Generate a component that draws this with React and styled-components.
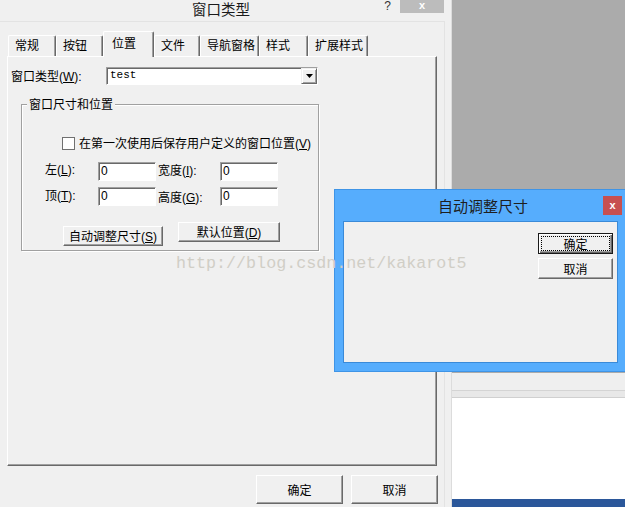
import React from 'react';
import styled, { createGlobalStyle } from 'styled-components';

const Global = createGlobalStyle`
  html, body { margin: 0; padding: 0; background: #f0f0f0; }
  body {
    font-family: "Noto Sans CJK SC", "Liberation Sans", sans-serif;
    font-size: 12px;
    color: #000;
  }
`;

const Screen = styled.div`
  position: relative;
  width: 625px;
  height: 507px;
  overflow: hidden;
  display: flex;
`;

/* ---------- main window ---------- */
const MainWindow = styled.div`
  flex: none;
  width: 452px;
  height: 507px;
  box-sizing: border-box;
  background: #f0f0f0;
  border-right: 1px solid #dcdcdc;
  display: flex;
  flex-direction: column;
`;

const TitleBar = styled.div`
  flex: none;
  height: 21px;
  display: flex;
  align-items: flex-start;
`;

const TitleText = styled.div`
  margin-left: 192px;
  margin-top: 1px;
  font-size: 14.5px;
  line-height: 16px;
  color: #1a1a1a;
  white-space: nowrap;
`;

const HelpMark = styled.div`
  margin-left: auto;
  margin-right: 9px;
  font-family: "Liberation Sans", sans-serif;
  font-size: 12px;
  line-height: 13px;
  color: #333;
`;

const GrayClose = styled.div`
  width: 44px;
  height: 13px;
  margin-right: 7px;
  background: #bcbcbc;
  color: #fff;
  display: flex;
  justify-content: center;
  font-family: "Liberation Sans", sans-serif;
  font-weight: bold;
  font-size: 11px;
  line-height: 11px;
`;

const Frame = styled.div`
  flex: 1;
  width: 445px;
  box-sizing: border-box;
  border-top: 1px solid #e3e3e3;
  border-right: 1px solid #e3e3e3;
  padding-left: 7px;
  display: flex;
  flex-direction: column;
`;

const TabStrip = styled.div`
  height: 35px;
  display: flex;
  align-items: flex-end;
  padding-left: 1px;
  margin-bottom: -1px;
  position: relative;
  z-index: 1;
`;

const Tab = styled.div`
  box-sizing: border-box;
  flex: none;
  width: ${p => p.$w}px;
  height: ${p => (p.$active ? 26 : 21)}px;
  margin-bottom: ${p => (p.$active ? 0 : 1)}px;
  padding: ${p => (p.$active ? '4px 0 0 8px' : '2px 0 0 6px')};
  line-height: 14px;
  white-space: nowrap;
  background: #f0f0f0;
  border-top: 1px solid #fff;
  border-left: 1px solid #fff;
  border-right: 1px solid #696969;
  box-shadow: inset -1px 0 0 #a0a0a0;
  border-radius: 2px 2px 0 0;
`;

const Panel = styled.div`
  width: 430px;
  height: 410px;
  box-sizing: border-box;
  border-top: 1px solid #fff;
  border-left: 1px solid #fff;
  border-right: 1px solid #696969;
  border-bottom: 1px solid #696969;
  box-shadow: inset -1px -1px 0 #a0a0a0;
  padding: 10px 0 0 3px;
  display: flex;
  flex-direction: column;
`;

const TypeRow = styled.div`
  display: flex;
  align-items: center;
  height: 18px;
`;

const Label = styled.span`
  flex: none;
  width: ${p => (p.$w ? `${p.$w}px` : 'auto')};
  line-height: 14px;
  white-space: nowrap;
  padding-left: ${p => p.$pl || 0}px;
  margin-top: ${p => p.$dy || 0}px;
  box-sizing: border-box;
`;

const Mnemonic = styled.span`
  font-family: "Liberation Sans", sans-serif;
  font-size: 12px;
  & u {
    text-decoration: underline;
    text-underline-offset: 1px;
  }
`;

const Key = ({ k, colon }) => (
  <Mnemonic>
    (<u>{k}</u>){colon ? ':' : ''}
  </Mnemonic>
);

const Combo = styled.div`
  width: 212px;
  height: 18px;
  box-sizing: border-box;
  display: flex;
  background: #fff;
  border-top: 1px solid #a0a0a0;
  border-left: 1px solid #a0a0a0;
  border-right: 1px solid #fff;
  border-bottom: 1px solid #fff;
  box-shadow: inset 1px 1px 0 #696969;
`;

const ComboValue = styled.span`
  flex: 1;
  padding-left: 3px;
  font-family: "Liberation Mono", monospace;
  font-size: 11px;
  line-height: 15px;
`;

const ComboArrow = styled.div`
  width: 16px;
  box-sizing: border-box;
  background: #f0f0f0;
  border-top: 1px solid #f0f0f0;
  border-left: 1px solid #f0f0f0;
  border-right: 1px solid #696969;
  border-bottom: 1px solid #696969;
  box-shadow: inset 1px 1px 0 #fff, inset -1px -1px 0 #a0a0a0;
  display: flex;
  align-items: center;
  justify-content: center;
`;

const GroupBox = styled.div`
  margin: 19px 0 0 10px;
  width: 298px;
  height: 147px;
  box-sizing: border-box;
  border: 1px solid #a0a0a0;
  box-shadow: 1px 1px 0 #fff, inset 1px 1px 0 #fff;
  display: flex;
  flex-direction: column;
  align-items: flex-start;
`;

const GroupTitle = styled.span`
  margin: -8px 0 0 5px;
  padding: 0 2px;
  background: #f0f0f0;
  line-height: 14px;
  white-space: nowrap;
`;

const CheckRow = styled.label`
  margin: 25px 0 0 40px;
  display: flex;
  align-items: center;
  gap: 4px;
  line-height: 14px;
  white-space: nowrap;
`;

const CheckBox = styled.span`
  width: 13px;
  height: 13px;
  box-sizing: border-box;
  background: #fff;
  border: 1px solid #707070;
  flex: none;
`;

const FieldGrid = styled.div`
  margin: 11px 0 0 23px;
  display: grid;
  grid-template-columns: 53px 58px 64px 58px;
  grid-auto-rows: 19px;
  row-gap: 6px;
  align-items: center;
`;

const TextBox = styled.div`
  height: 19px;
  box-sizing: border-box;
  background: #fff;
  border-top: 1px solid #a0a0a0;
  border-left: 1px solid #a0a0a0;
  border-right: 1px solid #fff;
  border-bottom: 1px solid #fff;
  box-shadow: inset 1px 1px 0 #696969;
  padding-left: 2px;
  font-family: "Liberation Sans", sans-serif;
  font-size: 12px;
  line-height: 17px;
`;

const GroupButtons = styled.div`
  margin: 16px 0 0 41px;
  display: flex;
  align-items: flex-start;
  gap: 15px;
`;

const Button = styled.button`
  box-sizing: border-box;
  width: ${p => p.$w}px;
  height: ${p => p.$h}px;
  margin-top: ${p => p.$mt || 0}px;
  padding: 0;
  background: #f0f0f0;
  border-top: 1px solid #fff;
  border-left: 1px solid #fff;
  border-right: 1px solid #696969;
  border-bottom: 1px solid #696969;
  border-radius: 0;
  box-shadow: inset -1px -1px 0 #a0a0a0;
  font-family: "Noto Sans CJK SC", "Liberation Sans", sans-serif;
  font-size: 12px;
  line-height: 14px;
  color: #000;
  white-space: nowrap;
`;

const DefaultButton = styled(Button)`
  border: 1px solid #1a1a1a;
  box-shadow: inset 1px 1px 0 #fff, inset -1px -1px 0 #696969, inset -2px -2px 0 #a0a0a0;
  outline: 1px dotted #000;
  outline-offset: -4px;
`;

const FooterRow = styled.div`
  width: 431px;
  margin-top: 9px;
  display: flex;
  justify-content: flex-end;
  gap: 8px;
`;

/* ---------- right backdrop ---------- */
const Backdrop = styled.div`
  flex: 1;
  display: flex;
  flex-direction: column;
`;

const GrayArea = styled.div`
  height: 373px;
  background: #ababab;
`;

const StripA = styled.div`
  height: 18px;
  box-sizing: border-box;
  background: #efefef;
  border-bottom: 1px solid #d4d4d4;
`;

const StripB = styled.div`
  height: 7px;
  box-sizing: border-box;
  background: #e8e8e8;
  border-bottom: 1px solid #d0d0d0;
`;

const WhiteArea = styled.div`
  flex: 1;
  background: #fff;
`;

const BlueBar = styled.div`
  height: 8px;
  background: #2b579a;
`;

/* ---------- overlay dialog ---------- */
const Dialog = styled.div`
  position: absolute;
  left: 334px;
  top: 189px;
  width: 293px;
  height: 183px;
  box-sizing: border-box;
  background: #56adfd;
  border: 1px solid #3f94e6;
  display: flex;
  flex-direction: column;
  z-index: 3;
`;

const DialogTitleBar = styled.div`
  height: 31px;
  flex: none;
  display: grid;
  grid-template-columns: 1fr auto 1fr;
  align-items: center;
  padding: 0 4px 0 9px;
`;

const DialogTitle = styled.div`
  font-size: 15px;
  line-height: 18px;
  color: #1e1e1e;
  white-space: nowrap;
`;

const RedClose = styled.div`
  justify-self: end;
  width: 19px;
  height: 19px;
  background: #c75050;
  color: #fff;
  font-family: "Liberation Sans", sans-serif;
  font-weight: bold;
  font-size: 11px;
  line-height: 18px;
  text-align: center;
`;

const DialogClient = styled.div`
  flex: 1;
  margin: 0 8px 8px 8px;
  background: #f0f0f0;
  border: 1px solid #3a8ad8;
  display: flex;
  flex-direction: column;
  align-items: flex-end;
  gap: 4px;
  padding: 11px 4px 0 0;
`;

const Watermark = styled.div`
  position: absolute;
  left: 176px;
  top: 254px;
  font-family: "Liberation Mono", monospace;
  font-size: 16.7px;
  line-height: 20px;
  color: #d0cec6;
  white-space: nowrap;
  pointer-events: none;
  z-index: 5;
`;

const Triangle = () => (
  <svg width="7" height="4" viewBox="0 0 7 4">
    <path d="M0 0H7L3.5 4Z" fill="#000" />
  </svg>
);

const tabs = [
  { label: '常规', w: 48 },
  { label: '按钮', w: 47 },
  { label: '位置', w: 51, active: true },
  { label: '文件', w: 46 },
  { label: '导航窗格', w: 59 },
  { label: '样式', w: 49 },
  { label: '扩展样式', w: 60 },
];

export default function App() {
  return (
    <>
      <Global />
      <Screen>
        <MainWindow>
          <TitleBar>
            <TitleText>窗口类型</TitleText>
            <HelpMark>?</HelpMark>
            <GrayClose>x</GrayClose>
          </TitleBar>
          <Frame>
            <TabStrip>
              {tabs.map(t => (
                <Tab key={t.label} $w={t.w} $active={t.active}>
                  {t.label}
                </Tab>
              ))}
            </TabStrip>
            <Panel>
              <TypeRow>
                <Label $w={95}>
                  窗口类型<Key k="W" colon />
                </Label>
                <Combo>
                  <ComboValue>test</ComboValue>
                  <ComboArrow>
                    <Triangle />
                  </ComboArrow>
                </Combo>
              </TypeRow>
              <GroupBox>
                <GroupTitle>窗口尺寸和位置</GroupTitle>
                <CheckRow>
                  <CheckBox />
                  <span>
                    在第一次使用后保存用户定义的窗口位置<Key k="V" />
                  </span>
                </CheckRow>
                <FieldGrid>
                  <Label $dy={-4}>
                    左<Key k="L" colon />
                  </Label>
                  <TextBox>0</TextBox>
                  <Label $pl={2} $dy={-3}>
                    宽度<Key k="I" colon />
                  </Label>
                  <TextBox>0</TextBox>
                  <Label $dy={-2}>
                    顶<Key k="T" colon />
                  </Label>
                  <TextBox>0</TextBox>
                  <Label $pl={2} $dy={2}>
                    高度<Key k="G" colon />
                  </Label>
                  <TextBox>0</TextBox>
                </FieldGrid>
                <GroupButtons>
                  <Button $w={100} $h={20} $mt={4}>
                    自动调整尺寸<Key k="S" />
                  </Button>
                  <Button $w={102} $h={20}>
                    默认位置<Key k="D" />
                  </Button>
                </GroupButtons>
              </GroupBox>
            </Panel>
            <FooterRow>
              <Button $w={87} $h={29}>确定</Button>
              <Button $w={87} $h={29}>取消</Button>
            </FooterRow>
          </Frame>
        </MainWindow>
        <Backdrop>
          <GrayArea />
          <StripA />
          <StripB />
          <WhiteArea />
          <BlueBar />
        </Backdrop>

        <Dialog>
          <DialogTitleBar>
            <span />
            <DialogTitle>自动调整尺寸</DialogTitle>
            <RedClose>x</RedClose>
          </DialogTitleBar>
          <DialogClient>
            <DefaultButton $w={75} $h={21}>确定</DefaultButton>
            <Button $w={75} $h={21}>取消</Button>
          </DialogClient>
        </Dialog>

        <Watermark>http://blog.csdn.net/kakarot5</Watermark>
      </Screen>
    </>
  );
}
